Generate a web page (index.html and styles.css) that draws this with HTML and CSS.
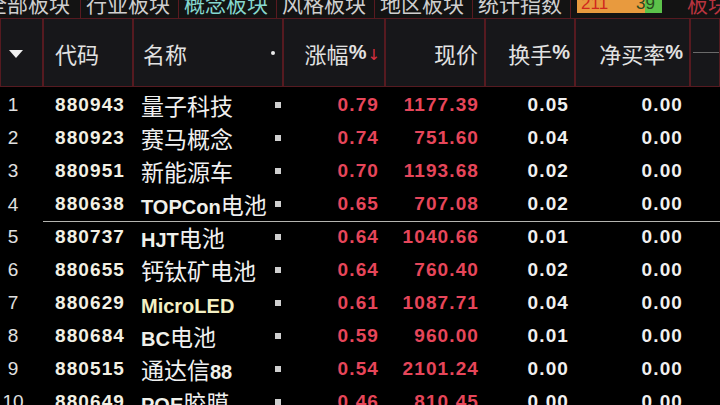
FILE: index.html
```html
<!DOCTYPE html>
<html>
<head>
<meta charset="utf-8">
<link rel="stylesheet" href="styles.css">
</head>
<body>
<div class="screen">
  <div class="tabs">
    <div class="tab first"><span>全部板块</span></div>
    <div class="tab"><span>行业板块</span></div>
    <div class="tab active"><span>概念板块</span></div>
    <div class="tab"><span>风格板块</span></div>
    <div class="tab"><span>地区板块</span></div>
    <div class="tab"><span>统计指数</span></div>
    <div class="updown"><span class="up">211</span><span class="down">39</span></div>
    <div class="tab-more"><span>板块</span></div>
  </div>
  <div class="thead">
    <div class="th c-num"><svg width="14" height="8" viewBox="0 0 14 8"><polygon points="0,0 14,0 7,8" fill="#f0f0f0"/></svg></div>
    <div class="th c-code">代码</div>
    <div class="th c-name">名称<i class="hdot"></i></div>
    <div class="th c-r pr-chg">涨幅<b>%</b><em class="arrow">↓</em></div>
    <div class="th c-r pr-price">现价</div>
    <div class="th c-r pr-turn">换手<b>%</b></div>
    <div class="th c-r pr-net">净买率<b>%</b></div>
    <div class="th c-extra"><i class="dash"></i></div>
  </div>
  <div class="tbody">
    <div class="row"><div class="num">1</div><div class="code">880943</div><div class="name"><span>量子科技</span><i class="dot"></i></div><div class="red pr-chg">0.79</div><div class="red pr-price">1177.39</div><div class="wht pr-turn">0.05</div><div class="wht pr-net">0.00</div><div></div></div>
    <div class="row"><div class="num">2</div><div class="code">880923</div><div class="name"><span>赛马概念</span><i class="dot"></i></div><div class="red pr-chg">0.74</div><div class="red pr-price">751.60</div><div class="wht pr-turn">0.04</div><div class="wht pr-net">0.00</div><div></div></div>
    <div class="row"><div class="num">3</div><div class="code">880951</div><div class="name"><span>新能源车</span><i class="dot"></i></div><div class="red pr-chg">0.70</div><div class="red pr-price">1193.68</div><div class="wht pr-turn">0.02</div><div class="wht pr-net">0.00</div><div></div></div>
    <div class="row split"><div class="num">4</div><div class="code">880638</div><div class="name"><span><b class="lat">TOPCon</b>电池</span><i class="dot"></i></div><div class="red pr-chg">0.65</div><div class="red pr-price">707.08</div><div class="wht pr-turn">0.02</div><div class="wht pr-net">0.00</div><div></div></div>
    <div class="row"><div class="num">5</div><div class="code">880737</div><div class="name"><span><b class="lat">HJT</b>电池</span><i class="dot"></i></div><div class="red pr-chg">0.64</div><div class="red pr-price">1040.66</div><div class="wht pr-turn">0.01</div><div class="wht pr-net">0.00</div><div></div></div>
    <div class="row"><div class="num">6</div><div class="code">880655</div><div class="name"><span>钙钛矿电池</span><i class="dot"></i></div><div class="red pr-chg">0.64</div><div class="red pr-price">760.40</div><div class="wht pr-turn">0.02</div><div class="wht pr-net">0.00</div><div></div></div>
    <div class="row"><div class="num">7</div><div class="code">880629</div><div class="name"><span><b class="lat yel">MicroLED</b></span><i class="dot"></i></div><div class="red pr-chg">0.61</div><div class="red pr-price">1087.71</div><div class="wht pr-turn">0.04</div><div class="wht pr-net">0.00</div><div></div></div>
    <div class="row"><div class="num">8</div><div class="code">880684</div><div class="name"><span><b class="lat">BC</b>电池</span><i class="dot"></i></div><div class="red pr-chg">0.59</div><div class="red pr-price">960.00</div><div class="wht pr-turn">0.01</div><div class="wht pr-net">0.00</div><div></div></div>
    <div class="row"><div class="num">9</div><div class="code">880515</div><div class="name"><span>通达信<b class="lat">88</b></span><i class="dot"></i></div><div class="red pr-chg">0.54</div><div class="red pr-price">2101.24</div><div class="wht pr-turn">0.00</div><div class="wht pr-net">0.00</div><div></div></div>
    <div class="row"><div class="num">10</div><div class="code">880649</div><div class="name"><span><b class="lat">POE</b>胶膜</span><i class="dot"></i></div><div class="red pr-chg">0.46</div><div class="red pr-price">810.45</div><div class="wht pr-turn">0.00</div><div class="wht pr-net">0.00</div><div></div></div>
  </div>
</div>
</body>
</html>
```
FILE: styles.css
```css
html, body {
  margin: 0;
  padding: 0;
  background: #000;
}
.screen {
  width: 720px;
  height: 405px;
  overflow: hidden;
  background: #000;
  font-family: "Noto Sans CJK SC", "Liberation Sans", sans-serif;
}

/* top tab bar */
.tabs {
  display: flex;
  height: 18px;
  overflow: hidden;
  background: #131313;
}
.tab {
  width: 98px;
  flex: none;
  height: 18px;
  overflow: hidden;
  border-right: 1px solid #5a1a20;
  padding-left: 5px;
  box-sizing: border-box;
  color: #cfcfcf;
  font-size: 21px;
}
.tab span {
  display: block;
  line-height: 24px;
  margin-top: -9px;
  white-space: nowrap;
}
.tab.first {
  width: 100px;
  margin-left: -19px;
}
.tab.active {
  color: #86d8cf;
}
.updown {
  flex: none;
  display: flex;
  margin-left: 6px;
  width: 85px;
  height: 13px;
  overflow: hidden;
  background: linear-gradient(to right, #e89a3e 0, #e89a3e 68px, #5cc24a 68px);
  font-family: "Liberation Sans", sans-serif;
  font-size: 17px;
  line-height: 16px;
}
.updown span {
  display: block;
  margin-top: -4px;
}
.updown .up {
  color: #d0281e;
  padding-left: 4px;
}
.updown .down {
  color: #2a4a1e;
  margin-left: auto;
  padding-right: 7px;
}
.tab-more {
  flex: none;
  margin-left: 25px;
  color: #b8343f;
  font-size: 21px;
  height: 18px;
  overflow: hidden;
}
.tab-more span {
  display: block;
  line-height: 24px;
  margin-top: -9px;
  white-space: nowrap;
}

/* header */
.thead, .row {
  display: grid;
  grid-template-columns: 43px 90px 150px 102px 100px 90px 115px 30px;
}
.thead {
  height: 69px;
  background: #0c0c0c;
}
.th {
  box-sizing: border-box;
  border: 1px solid #561a20;
  background: #17171a;
  display: flex;
  align-items: center;
  color: #e2e2e2;
  font-size: 22px;
  white-space: nowrap;
}
.th b {
  font-family: "Liberation Sans", sans-serif;
  font-weight: 700;
  font-size: 20px;
}
.th.c-num {
  padding-left: 8px;
  padding-top: 2px;
}
.th.c-code {
  padding-left: 11px;
}
.th.c-name {
  padding-left: 9px;
}
.hdot {
  width: 4px;
  height: 4px;
  border-radius: 50%;
  background: #eaeaea;
  margin-left: auto;
  margin-right: 7px;
}
.th.c-r {
  justify-content: flex-end;
}
.th.pr-chg { padding-right: 4px; }
.th.pr-price { padding-right: 6px; }
.th.pr-turn { padding-right: 4px; }
.th.pr-net { padding-right: 6px; }
.arrow {
  font-style: normal;
  color: #d83040;
  font-size: 15px;
  font-family: "DejaVu Sans", sans-serif;
  margin-left: 1px;
  margin-top: 4px;
}
.th.c-extra {
  align-items: center;
  padding-left: 2px;
}
.dash {
  display: block;
  width: 28px;
  height: 1px;
  background: #6a6a6a;
}

/* body */
.tbody {
  padding-top: 1px;
}
.row {
  height: 33px;
  align-items: stretch;
}
.row > div {
  display: flex;
  align-items: center;
  box-sizing: border-box;
  white-space: nowrap;
}
.row.split > div + div {
  border-bottom: 1px solid #b4b4b0;
}
.num {
  justify-content: center;
  padding-right: 17px;
  color: #e0e0e0;
  font-family: "Liberation Sans", sans-serif;
  font-size: 19px;
}
.code {
  padding-left: 12px;
  color: #f2f0e4;
  font-family: "Liberation Sans", sans-serif;
  font-weight: 700;
  font-size: 19px;
  letter-spacing: 1.1px;
}
.name {
  padding-left: 8px;
  padding-right: 2px;
  color: #f0f0f0;
  font-size: 23px;
}
.lat {
  font-family: "Liberation Sans", sans-serif;
  font-weight: 700;
  font-size: 20px;
  color: #f0f0ea;
}
.lat.yel {
  color: #f4f0c4;
}
.dot {
  width: 6px;
  height: 6px;
  background: #cfcfcf;
  margin-left: auto;
  flex: none;
}
.red, .wht {
  justify-content: flex-end;
  font-family: "Liberation Sans", sans-serif;
  font-weight: 700;
  font-size: 19px;
  letter-spacing: 1.1px;
}
.red { color: #e6465a; }
.wht { color: #f0f0f0; }
.red.pr-chg { padding-right: 6px; }
.red.pr-price { padding-right: 6px; }
.wht.pr-turn { padding-right: 6px; }
.wht.pr-net { padding-right: 7px; }
```
